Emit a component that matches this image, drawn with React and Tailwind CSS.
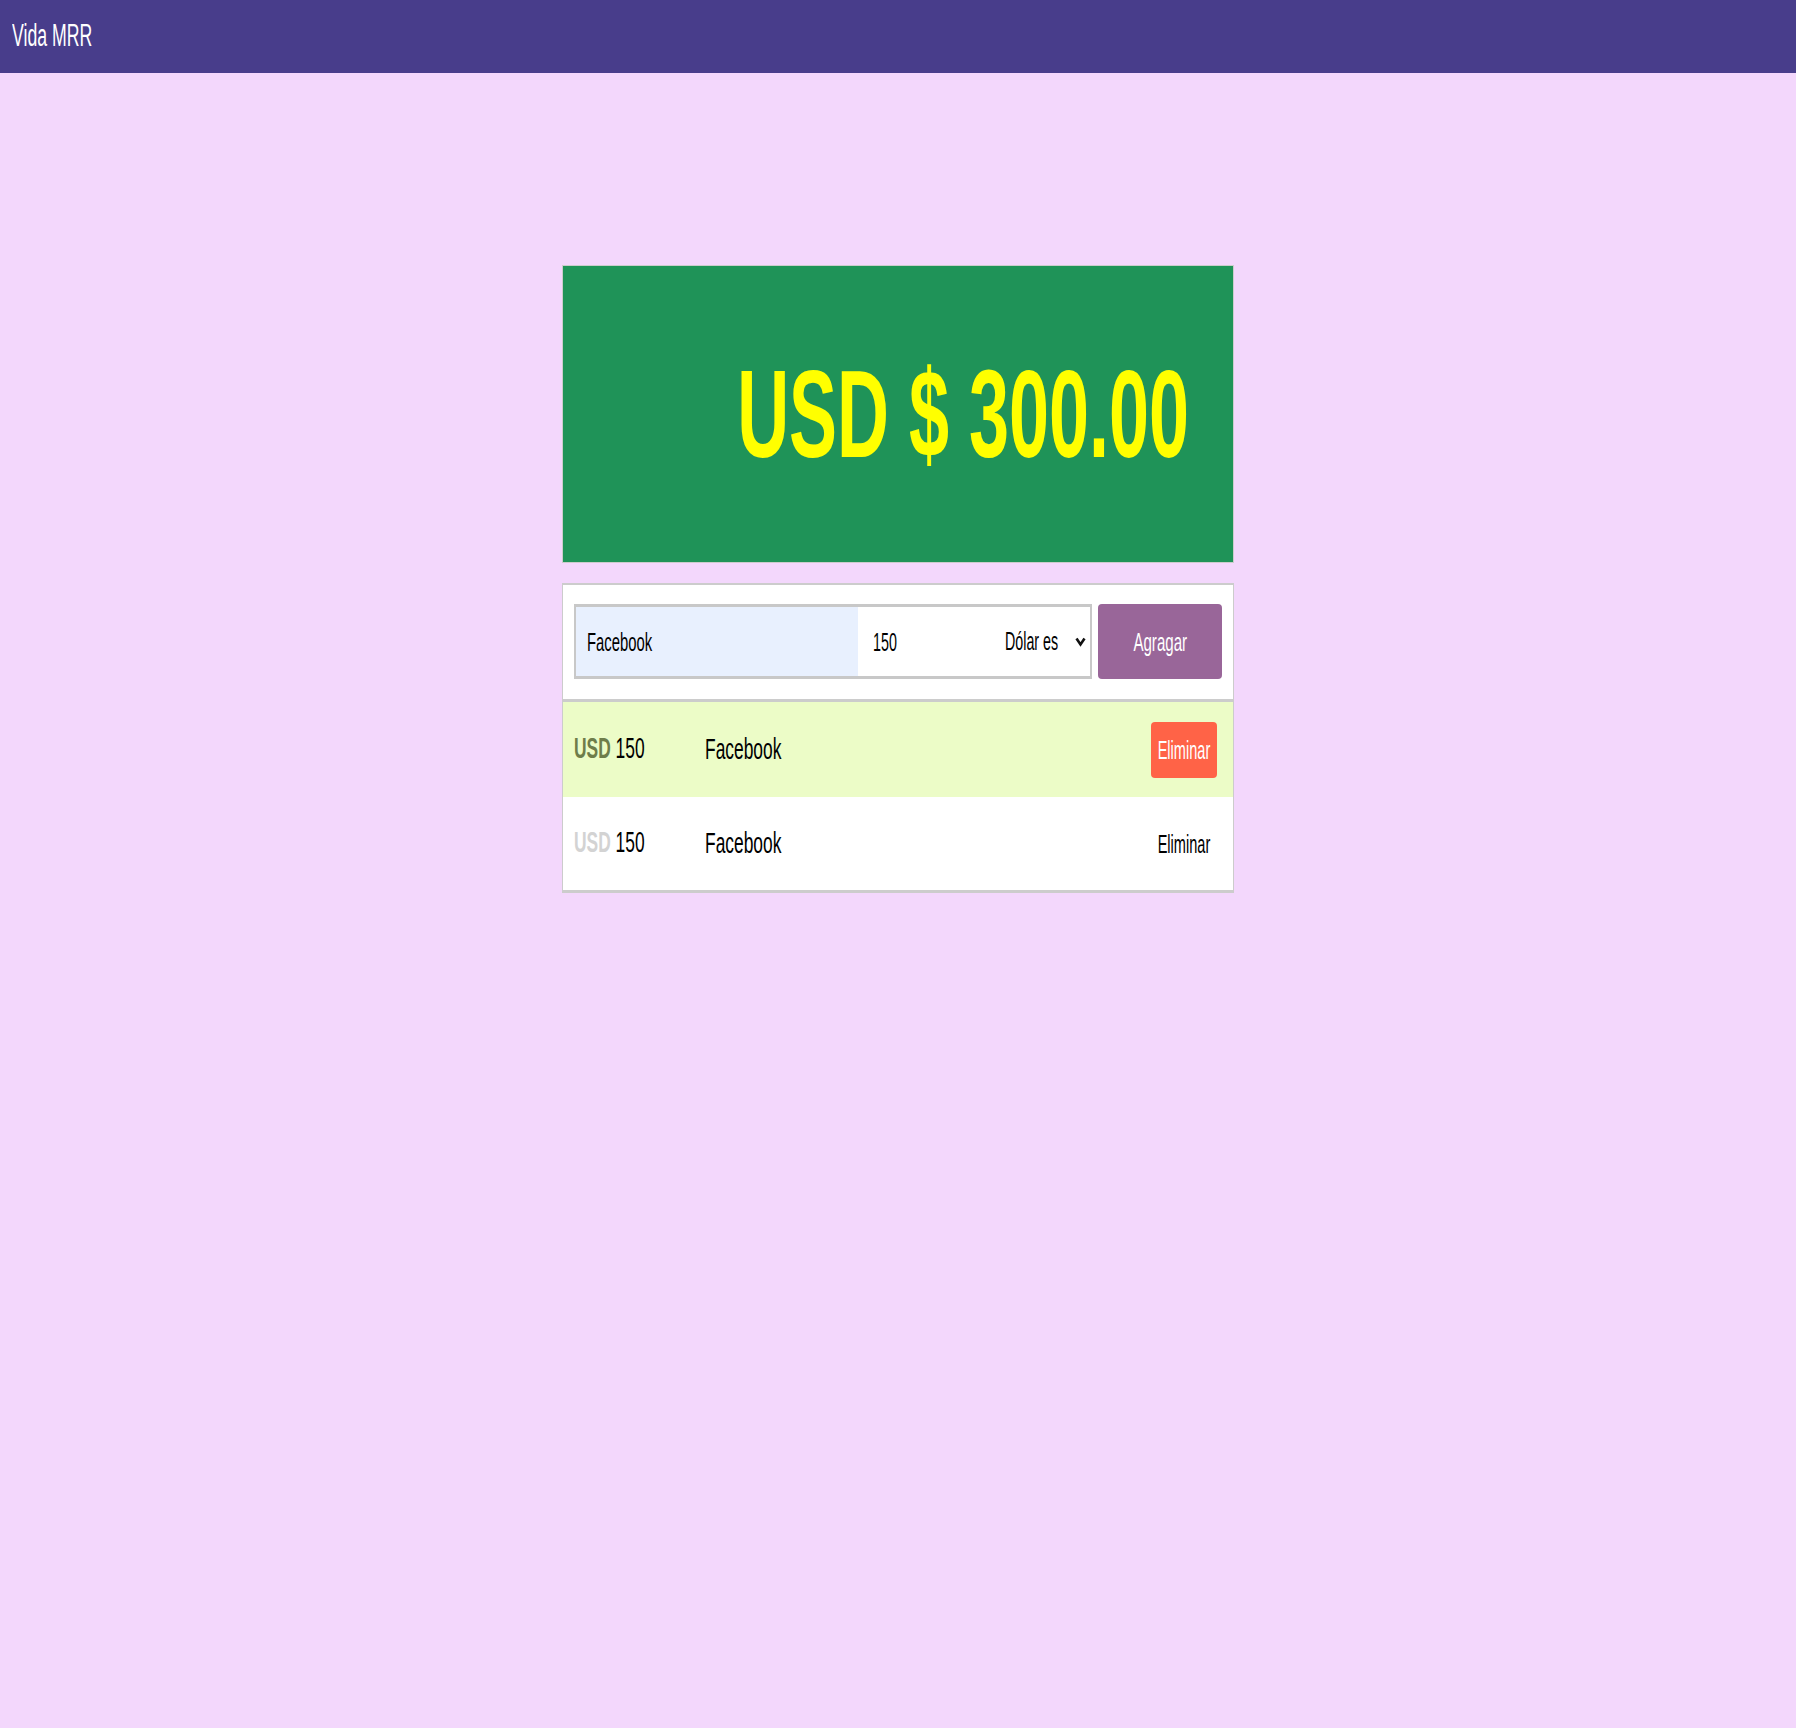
import React from "react";

const font = { fontFamily: '"Liberation Sans", Arial, sans-serif' };

// the whole screenshot is squeezed horizontally, so text is narrowed with scale-x
const Narrow = ({ children, className = "" }) => (
  <span className={`inline-block whitespace-nowrap ${className}`}>{children}</span>
);

const gastos = [
  { id: 1, monto: 150, nombre: "Facebook", activo: true },
  { id: 2, monto: 150, nombre: "Facebook", activo: false },
];

export default function App() {
  return (
    <div className="min-h-screen bg-[#F3D7FC]" style={font}>
      {/* Top bar */}
      <header className="h-[73px] bg-[#483D8B] px-3 flex items-center">
        <Narrow className="text-[31px] leading-none text-white scale-x-[0.57] origin-left -mt-[3px]">
          Vida MRR
        </Narrow>
      </header>

      <main className="w-[672px] mx-auto mt-[192px]">
        {/* Total */}
        <div className="h-[298px] bg-[#1F9358] border border-[#cccccc] flex items-center justify-end pr-[44px] overflow-hidden">
          <Narrow className="text-[124px] leading-none font-bold text-[#FFFF00] scale-x-[0.58] origin-right">
            USD $ 300.00
          </Narrow>
        </div>

        {/* Form + list */}
        <div className="mt-[20px] bg-white border border-t-2 border-[#cccccc] border-b-[3px]">
          <div className="flex gap-[6px] px-[11px] pt-[19px] pb-[20px] border-b-[3px] border-[#cccccc]">
            <div className="flex-1 h-[75px] flex border-x-2 border-y-[3px] border-[#c8c8c8]">
              <div className="w-[282px] bg-[#E8F0FE] flex items-center pl-[11px] overflow-hidden">
                <Narrow className="text-[26px] leading-none text-black scale-x-[0.57] origin-left">
                  Facebook
                </Narrow>
              </div>
              <div className="flex-1 flex items-center pl-[15px] overflow-hidden">
                <Narrow className="text-[26px] leading-none text-black scale-x-[0.55] origin-left">
                  150
                </Narrow>
              </div>
              <div className="w-[100px] flex items-center justify-end pr-[4px] gap-[17px]">
                <Narrow className="text-[25px] leading-none text-black scale-x-[0.57] origin-right">
                  Dólar es
                </Narrow>
                <svg width="11" height="11" viewBox="0 0 11 11" className="shrink-0">
                  <polyline points="1.5,2.5 5.5,8.5 9.5,2.5" fill="none" stroke="#111" strokeWidth="2.6" />
                </svg>
              </div>
            </div>
            <button className="w-[124px] h-[75px] rounded-[4px] bg-[#996699] flex items-center justify-center overflow-hidden">
              <Narrow className="text-[26px] leading-none text-white scale-x-[0.58]">Agragar</Narrow>
            </button>
          </div>

          {gastos.map((g) => (
            <div
              key={g.id}
              className={`flex items-center pl-[11px] pr-[16px] ${
                g.activo ? "h-[95px] bg-[#ECFCC7]" : "h-[93px] bg-white"
              }`}
            >
              <div className="w-[131px]">
                <Narrow className="text-[29px] leading-none text-black scale-x-[0.6] origin-left">
                  <span className={`font-bold ${g.activo ? "text-[#6E7D4A]" : "text-[#D3D3D3]"}`}>USD</span>{" "}
                  {g.monto}
                </Narrow>
              </div>
              <Narrow className="text-[29px] leading-none text-black scale-x-[0.6] origin-left">
                {g.nombre}
              </Narrow>
              <button
                className={`ml-auto w-[66px] h-[56px] rounded-[4px] flex items-center justify-center ${
                  g.activo ? "bg-[#FF6347] text-white" : "bg-transparent text-black"
                }`}
              >
                <Narrow className="text-[26px] leading-none scale-x-[0.56]">Eliminar</Narrow>
              </button>
            </div>
          ))}
        </div>
      </main>
    </div>
  );
}
